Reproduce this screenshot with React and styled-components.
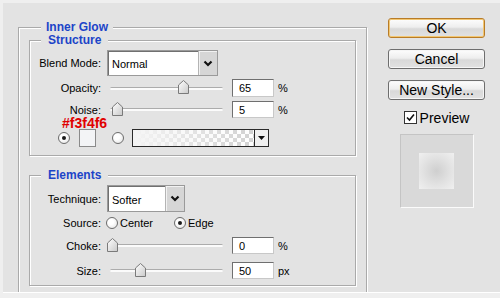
import React from 'react';
import styled, { createGlobalStyle } from 'styled-components';

const GlobalStyle = createGlobalStyle`
    html, body {
        margin: 0;
        padding: 0;
    }
    body {
        background: #efefef;
        font-family: "Liberation Sans", Arial, sans-serif;
        font-size: 11px;
        color: #000;
    }
`;

const Dialog = styled.div`
    display: flex;
    align-items: flex-start;
    gap: 21px;
    margin: 3px 0 0 3px;
    height: 290px;
    padding: 15px 0 0 15px;
    box-sizing: border-box;
    background: #e3e3e3;
    border-bottom: 1px solid #fff;
    overflow: hidden;
`;

const Group = styled.fieldset`
    margin: ${p => p.$mt || 0}px 0 0 0;
    padding: ${p => p.$pad};
    width: ${p => p.$w ? `${p.$w}px` : 'auto'};
    box-sizing: border-box;
    min-width: 0;
    border: 1px solid #aaaaaa;
    box-shadow: inset 1px 1px 0 #fff, 1px 1px 0 #fff;
`;

const Legend = styled.legend`
    margin-left: ${p => p.$indent}px;
    padding: 0 ${p => p.$space}px;
    font-size: 12px;
    line-height: 13px;
    font-weight: bold;
    color: #1c44c8;
    background: #e3e3e3;
`;

const Row = styled.div`
    display: flex;
    align-items: center;
    height: ${p => p.$h}px;
    margin-top: ${p => p.$mt || 0}px;
`;

const Label = styled.span`
    flex: none;
    width: 71px;
    text-align: right;
    margin-right: ${p => p.$gap ?? 6}px;
`;

const SelectBox = styled.div`
    display: flex;
    width: ${p => p.$w}px;
    height: ${p => p.$h}px;
    box-sizing: border-box;
    border: 1px solid #9a9a9a;
    box-shadow: inset 1px 1px 0 #707070;
    background: #fff;
`;

const SelectValue = styled.span`
    flex: 1;
    display: flex;
    align-items: center;
    padding: 2px 0 0 4px;
    font-size: 11px;
`;

const SelectButton = styled.span`
    flex: none;
    width: 18px;
    display: flex;
    align-items: center;
    justify-content: center;
    background: #d6d6d6;
    border-left: 1px solid #b4b4b4;
    box-shadow: inset 1px 1px 0 #f2f2f2;
`;

const SliderWrap = styled.div`
    flex: none;
    position: relative;
    display: flex;
    align-items: center;
    width: 116px;
    height: 14px;
    margin-right: 9px;
`;

const Track = styled.div`
    flex: 1;
    margin-left: 3px;
    height: 2px;
    border-top: 1px solid #acacac;
    background: #fbfbfb;
    border-radius: 2px;
`;

const Thumb = styled.svg`
    position: absolute;
    top: -1px;
`;

const NumField = styled.div`
    flex: none;
    display: flex;
    align-items: center;
    width: 42px;
    height: ${p => p.$h || 17}px;
    box-sizing: border-box;
    padding-left: 6px;
    border: 1px solid #6f6f6f;
    border-right-color: #c8c8c8;
    border-bottom-color: #c8c8c8;
    background: #fff;
`;

const Unit = styled.span`
    margin-left: 4px;
`;

const HexNote = styled.div`
    margin-left: 32px;
    height: 11px;
    line-height: 11px;
    font-size: 14px;
    font-weight: bold;
    color: #e00000;
`;

const Radio = styled.span`
    flex: none;
    display: flex;
    align-items: center;
    justify-content: center;
    width: 12px;
    height: 12px;
    box-sizing: border-box;
    margin-left: ${p => p.$ml || 0}px;
    border-radius: 50%;
    border: 1px solid #6c6c6c;
    background: radial-gradient(circle at 40% 40%, #ffffff 30%, #dedede);
    &::after {
        content: '';
        width: 4px;
        height: 4px;
        border-radius: 50%;
        background: ${p => p.$on ? '#1a1a1a' : 'transparent'};
    }
`;

const RadioText = styled.span`
    margin-left: 2px;
    margin-right: ${p => p.$mr || 0}px;
`;

const Swatch = styled.span`
    flex: none;
    width: 17px;
    height: 18px;
    box-sizing: border-box;
    margin-left: 9px;
    border: 1px solid #8a8a8a;
    background: #f3f4f6;
`;

const GradientBox = styled.div`
    flex: none;
    display: flex;
    width: 137px;
    height: 18px;
    box-sizing: border-box;
    margin-left: 8px;
    border: 1px solid #2a2a2a;
`;

const GradientFill = styled.span`
    flex: 1;
    background:
        linear-gradient(to right, #f4f4f4, rgba(255, 255, 255, 0)),
        repeating-conic-gradient(#d2d2d2 0 25%, #ffffff 0 50%) 0 0 / 8px 8px;
`;

const GradientArrow = styled.span`
    flex: none;
    width: 13px;
    display: flex;
    align-items: center;
    justify-content: center;
    border-left: 1px solid #2a2a2a;
    background: #f0f0f0;
`;

const Side = styled.div`
    flex: none;
    width: 97px;
    display: flex;
    flex-direction: column;
    align-items: center;
`;

const Button = styled.div`
    width: 97px;
    height: 20px;
    box-sizing: border-box;
    margin-bottom: 11px;
    display: flex;
    align-items: center;
    justify-content: center;
    font-size: 14px;
    border: 1px solid ${p => p.$default ? '#b87c28' : '#6e6e6e'};
    border-radius: 3px;
    background: linear-gradient(#fdfdfd, #eeeeee 45%, #d9d9d9 55%, #e2e2e2);
    box-shadow: ${p => p.$default ? 'inset 0 0 0 1px #f3c772' : 'inset 0 0 0 1px #f6f6f6'};
`;

const CheckRow = styled.div`
    display: flex;
    align-items: center;
    height: 13px;
    font-size: 14px;
`;

const CheckBox = styled.span`
    flex: none;
    display: flex;
    align-items: center;
    justify-content: center;
    width: 13px;
    height: 13px;
    box-sizing: border-box;
    margin-right: 3px;
    border: 1px solid #333;
    background: #fff;
`;

const PreviewBox = styled.div`
    margin-top: 10px;
    width: 74px;
    height: 74px;
    box-sizing: border-box;
    display: flex;
    align-items: center;
    justify-content: center;
    background: #d9d9d9;
    border: 1px solid #c4c4c4;
    border-right-color: #fbfbfb;
    border-bottom-color: #fbfbfb;
`;

const PreviewSwatch = styled.div`
    width: 35px;
    height: 36px;
    background: radial-gradient(circle at 50% 50%, #cfcfcf 0%, #e2e2e2 55%, #f0f0f0 100%);
`;

const Chevron = () => (
    <svg width="10" height="7" viewBox="0 0 10 7">
        <path d="M1.5 1.5 L5 5 L8.5 1.5" fill="none" stroke="#111" strokeWidth="2.2" />
    </svg>
);

const Select = ({ value, w, h }) => (
    <SelectBox $w={w} $h={h}>
        <SelectValue>{value}</SelectValue>
        <SelectButton><Chevron /></SelectButton>
    </SelectBox>
);

const Slider = ({ pos }) => (
    <SliderWrap>
        <Track />
        <Thumb width="11" height="14" viewBox="0 0 11 14" style={{ left: `${110 * pos - 0.5}px` }}>
            <defs>
                <linearGradient id="thumbFill" x1="0" y1="0" x2="1" y2="1">
                    <stop offset="0" stopColor="#ffffff" />
                    <stop offset="1" stopColor="#c9c9c9" />
                </linearGradient>
            </defs>
            <path d="M5.5 0.5 L10.5 5 L10.5 13.5 L0.5 13.5 L0.5 5 Z" fill="url(#thumbFill)" stroke="#7a7a7a" />
        </Thumb>
    </SliderWrap>
);

const SliderRow = ({ label, pos, value, unit, mt, h }) => (
    <Row $h={h || 17} $mt={mt}>
        <Label>{label}</Label>
        <Slider pos={pos} />
        <NumField $h={h}>{value}</NumField>
        <Unit>{unit}</Unit>
    </Row>
);

const App = () => (
    <>
        <GlobalStyle />
        <Dialog>
            <Group $w={349} $mt={3} $pad="0 10px 12px">
                <Legend $indent={12} $space={5}>Inner Glow</Legend>

                <Group $pad="3px 0 8px">
                    <Legend $indent={11} $space={7}>Structure</Legend>
                    <Row $h={26}>
                        <Label>Blend Mode:</Label>
                        <Select value="Normal" w={111} h={26} />
                    </Row>
                    <SliderRow label="Opacity:" pos={0.65} value="65" unit="%" mt={3} h={18} />
                    <SliderRow label="Noise:" pos={0.05} value="5" unit="%" mt={4} />
                    <HexNote>#f3f4f6</HexNote>
                    <Row $h={18}>
                        <Radio $on $ml={28} />
                        <Swatch />
                        <Radio $ml={16} />
                        <GradientBox>
                            <GradientFill />
                            <GradientArrow>
                                <svg width="7" height="4" viewBox="0 0 7 4">
                                    <path d="M0 0 H7 L3.5 4 Z" fill="#111" />
                                </svg>
                            </GradientArrow>
                        </GradientBox>
                    </Row>
                </Group>

                <Group $mt={13} $pad="3px 0 6px">
                    <Legend $indent={11} $space={7}>Elements</Legend>
                    <Row $h={27}>
                        <Label>Technique:</Label>
                        <Select value="Softer" w={78} h={27} />
                    </Row>
                    <Row $h={16} $mt={3}>
                        <Label $gap={5}>Source:</Label>
                        <Radio />
                        <RadioText $mr={21}>Center</RadioText>
                        <Radio $on />
                        <RadioText>Edge</RadioText>
                    </Row>
                    <SliderRow label="Choke:" pos={0} value="0" unit="%" mt={6} />
                    <SliderRow label="Size:" pos={0.255} value="50" unit="px" mt={8} />
                </Group>
            </Group>

            <Side>
                <Button $default>OK</Button>
                <Button>Cancel</Button>
                <Button>New Style...</Button>
                <CheckRow>
                    <CheckBox>
                        <svg width="9" height="9" viewBox="0 0 9 9">
                            <path d="M1 4.5 L3.5 7 L8 1.5" fill="none" stroke="#111" strokeWidth="1.6" />
                        </svg>
                    </CheckBox>
                    Preview
                </CheckRow>
                <PreviewBox>
                    <PreviewSwatch />
                </PreviewBox>
            </Side>
        </Dialog>
    </>
);

export default App;
